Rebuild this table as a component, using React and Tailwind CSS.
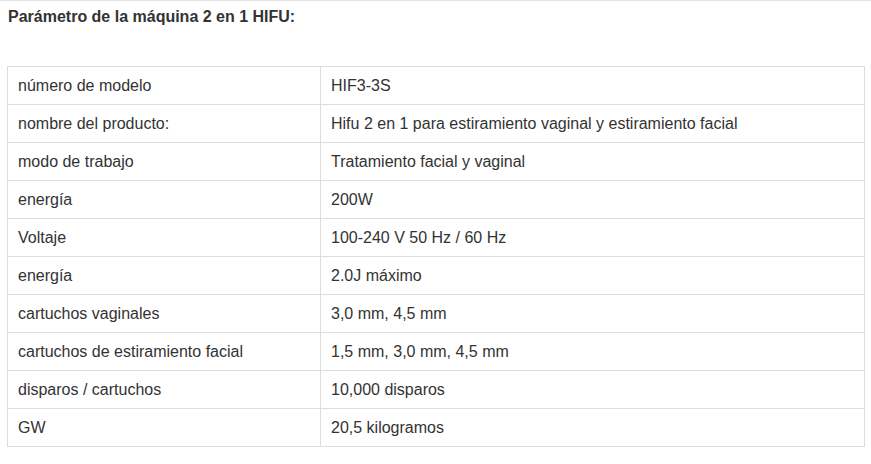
import React from "react";

const rows = [
  ["número de modelo", "HIF3-3S"],
  ["nombre del producto:", "Hifu 2 en 1 para estiramiento vaginal y estiramiento facial"],
  ["modo de trabajo", "Tratamiento facial y vaginal"],
  ["energía", "200W"],
  ["Voltaje", "100-240 V 50 Hz / 60 Hz"],
  ["energía", "2.0J máximo"],
  ["cartuchos vaginales", "3,0 mm, 4,5 mm"],
  ["cartuchos de estiramiento facial", "1,5 mm, 3,0 mm, 4,5 mm"],
  ["disparos / cartuchos", "10,000 disparos"],
  ["GW", "20,5 kilogramos"],
];

export default function App() {
  return (
    <div className="min-h-[464px] w-[871px] border-t border-[#e3e3e3] bg-white font-['Liberation_Sans',Arial,sans-serif] text-[#333]">
      <h2 className="pl-[8px] pt-[5px] text-[16px] font-bold leading-[22px]">
        Parámetro de la máquina 2 en 1 HIFU:
      </h2>
      <table className="ml-[7px] mt-[38px] w-[858px] border-collapse text-[16px]">
        <tbody>
          {rows.map(([k, v], i) => (
            <tr key={i} className="h-[38px]">
              <td className="w-[313px] border border-[#ddd] px-[10px] py-0 align-middle">{k}</td>
              <td className="border border-[#ddd] px-[10px] py-0 align-middle">{v}</td>
            </tr>
          ))}
        </tbody>
      </table>
    </div>
  );
}
